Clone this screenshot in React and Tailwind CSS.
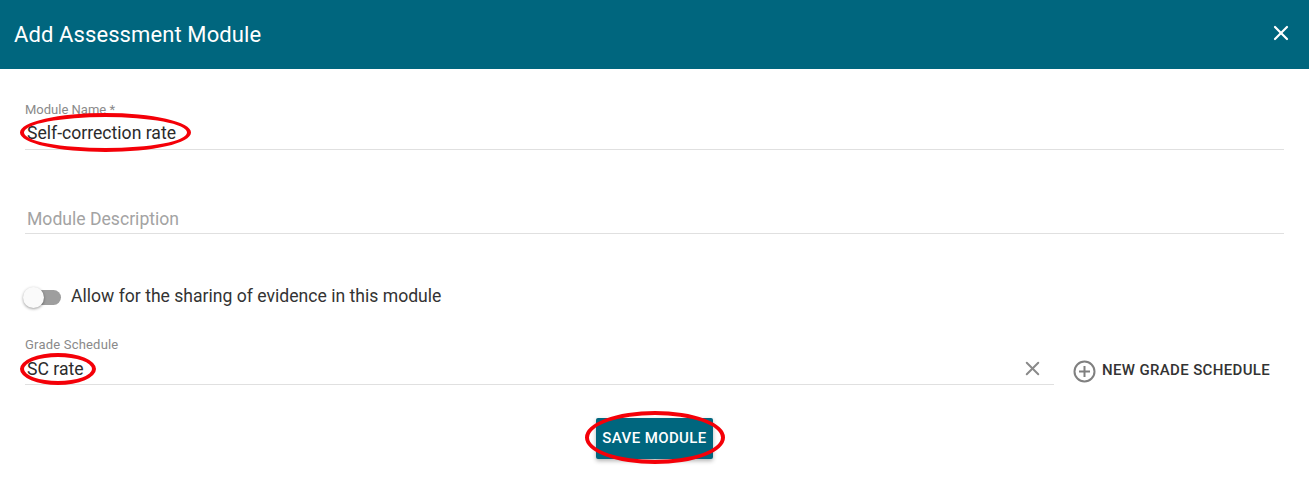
import React from 'react';
import { X } from 'lucide-react';

// red hand-drawn annotation rings lying over the form
const Ring = ({ className }) => (
  <div className={`absolute rounded-[50%] border-4 border-[#f40008] pointer-events-none ${className}`} />
);

const App = () => {
  return (
    <div className="relative h-[487px] w-full overflow-hidden bg-white font-['Roboto',sans-serif]">
      {/* Header */}
      <header className="flex h-[69px] items-center justify-between bg-[#00667e] pl-[14px] pr-[16px]">
        <h1 className="mb-[1px] text-[22px] font-normal tracking-[0.1px] text-white">Add Assessment Module</h1>
        <X size={24} strokeWidth={2.2} className="mb-[3px] text-white" />
      </header>

      <div className="flex flex-col px-[25px]">
        {/* Module name */}
        <div className="mt-[34px] flex h-[47px] flex-col border-b border-[#e0e0e0]">
          <label className="text-[13px] leading-[14px] text-[#8a8a8a]">Module Name *</label>
          <div className="mt-[4px] pl-[2px] text-[17.6px] leading-[24px] text-[#2b2b2b]">Self-correction rate</div>
        </div>

        {/* Module description */}
        <div className="mt-[57px] flex h-[27px] items-start border-b border-[#e0e0e0] pl-[2px]">
          <span className="text-[17.6px] leading-[24px] text-[#a3a3a3]">Module Description</span>
        </div>

        {/* Sharing toggle */}
        <div className="mt-[50px] flex h-[26px] items-center">
          <div className="relative h-[15px] w-[36px] rounded-full bg-[#9e9e9e]">
            <div className="absolute left-[-2px] top-[-3px] h-[21px] w-[21px] rounded-full bg-[#fafafa] shadow-[0_1px_3px_rgba(0,0,0,0.4)]" />
          </div>
          <span className="mb-[1px] ml-[10px] text-[17.6px] text-[#333333]">Allow for the sharing of evidence in this module</span>
        </div>

        {/* Grade schedule */}
        <div className="mt-[28px] flex items-start">
          <div className="flex h-[47px] w-[1029px] flex-col border-b border-[#e0e0e0]">
            <label className="text-[13px] tracking-[0.2px] leading-[14px] text-[#8a8a8a]">Grade Schedule</label>
            <div className="mt-[5px] flex items-center justify-between pl-[2px] pr-[10px]">
              <span className="text-[17.6px] leading-[24px] text-[#2b2b2b]">SC rate</span>
              <X size={23} strokeWidth={2.1} className="mb-[1px] text-[#8a8a8a]" />
            </div>
          </div>
          <button className="ml-[19px] mt-[18px] flex h-[28px] items-center gap-[6px]">
            <svg width="23" height="23" viewBox="0 0 23 23" fill="none" stroke="#808080" strokeWidth="2" className="mt-[2px]">
              <circle cx="11.5" cy="11.5" r="10" />
              <path d="M11.5 6v11M6 11.5h11" />
            </svg>
            <span className="text-[15px] font-medium tracking-[0.35px] text-[#333333]">NEW GRADE SCHEDULE</span>
          </button>
        </div>

        {/* Save */}
        <div className="mt-[33px] flex justify-center">
          <button className="h-[41px] w-[117px] rounded-[2px] bg-[#00667e] text-[15px] font-medium tracking-[0.4px] text-white shadow-[0_2px_4px_rgba(0,0,0,0.3)]">
            SAVE MODULE
          </button>
        </div>
      </div>

      <Ring className="left-[20px] top-[113px] h-[39px] w-[171px]" />
      <Ring className="left-[20px] top-[353px] h-[32px] w-[76px]" />
      <Ring className="left-[585px] top-[411px] h-[53px] w-[140px]" />
    </div>
  );
};

export default App;
